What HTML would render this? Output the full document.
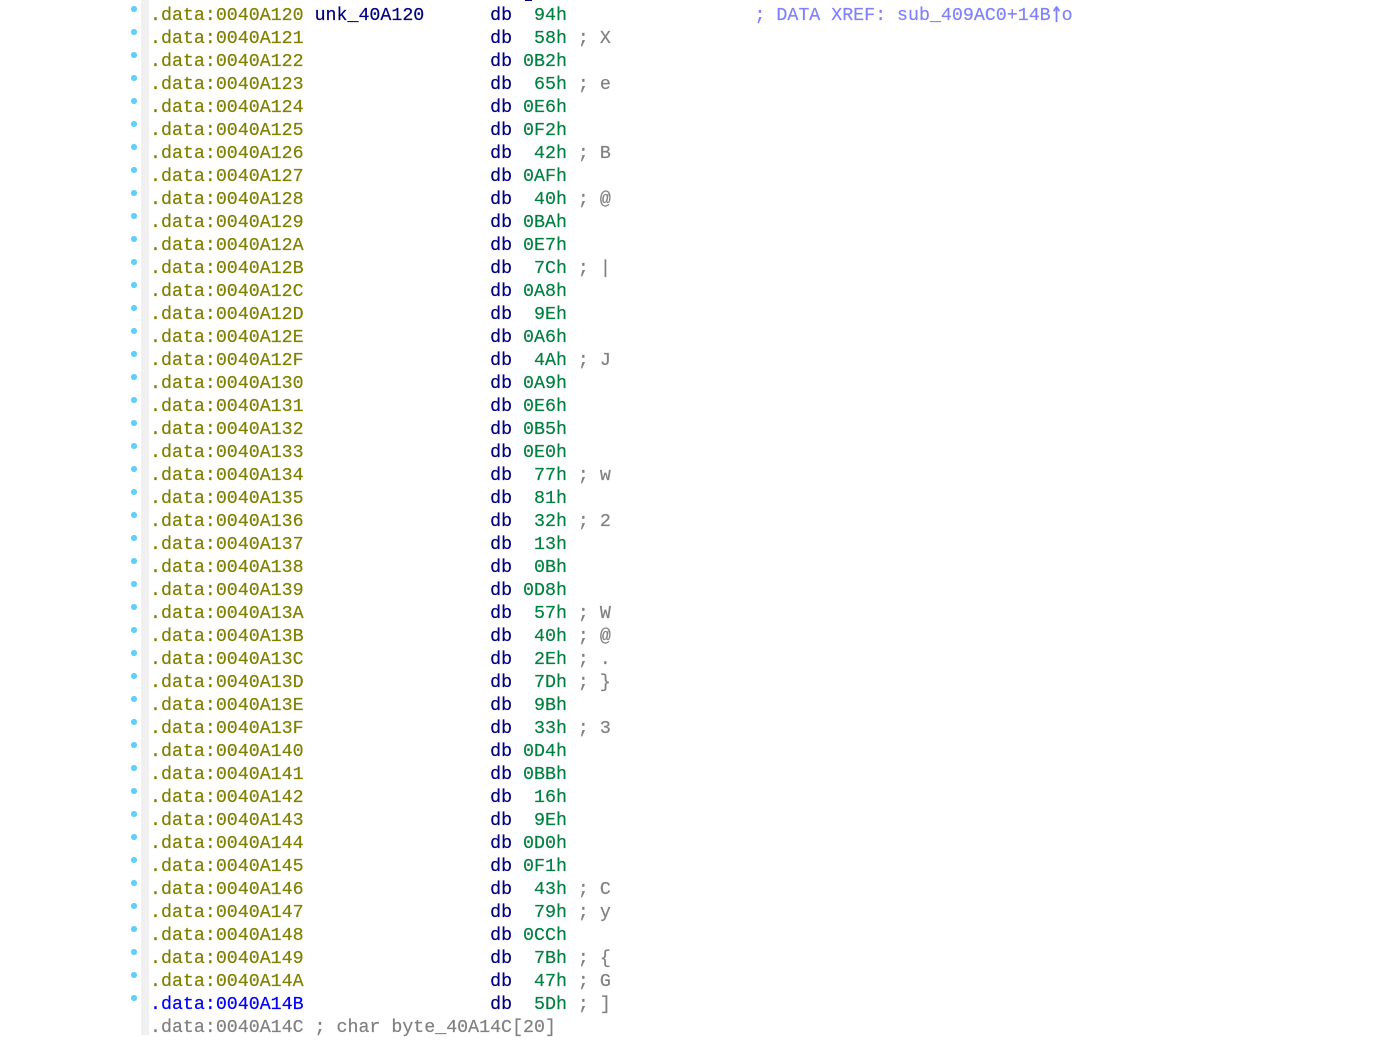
<!DOCTYPE html>
<html><head><meta charset="utf-8"><style>
html,body{margin:0;padding:0;background:#fff;width:1379px;height:1035px;overflow:hidden}
#bar{position:absolute;left:141px;top:0;width:8px;height:1035px;background:#f0f0f0}
#frag{position:absolute;left:525px;top:0;width:7px;height:1px;background:#000080}
#code{position:absolute;left:150px;top:5px;margin:0;font:18.3px/23px "Liberation Mono",monospace;color:#808000;white-space:pre;-webkit-text-stroke:.2px}
b{font-weight:normal;color:#000080}
i{font-style:normal;color:#008040}
u{text-decoration:none;color:#808080}
s{text-decoration:none;color:#8080ff;margin-left:1px}
em{font-style:normal;color:#0000ff}
tt{display:inline-block;width:10.98px;text-align:center;line-height:14px;font-family:"DejaVu Sans Mono",monospace;transform:translateY(-1px) scale(1.1,1.6)}
#dots{position:absolute;left:131px;top:6px;width:6px;height:1000px;background:radial-gradient(circle at 3px 3px,#5fcfff 2.8px,transparent 3.3px) 0 0/6px 23px repeat-y}
</style></head><body>
<div id="bar"></div><div id="dots"></div><div id="frag"></div>
<pre id="code">.data:0040A120 <b>unk_40A120</b>      <b>db</b>  <i>94h</i>                 <s>; DATA XREF: sub_409AC0+14B<tt>↑</tt>o</s>
.data:0040A121                 <b>db</b>  <i>58h</i> <u>; X</u>
.data:0040A122                 <b>db</b> <i>0B2h</i>
.data:0040A123                 <b>db</b>  <i>65h</i> <u>; e</u>
.data:0040A124                 <b>db</b> <i>0E6h</i>
.data:0040A125                 <b>db</b> <i>0F2h</i>
.data:0040A126                 <b>db</b>  <i>42h</i> <u>; B</u>
.data:0040A127                 <b>db</b> <i>0AFh</i>
.data:0040A128                 <b>db</b>  <i>40h</i> <u>; @</u>
.data:0040A129                 <b>db</b> <i>0BAh</i>
.data:0040A12A                 <b>db</b> <i>0E7h</i>
.data:0040A12B                 <b>db</b>  <i>7Ch</i> <u>; |</u>
.data:0040A12C                 <b>db</b> <i>0A8h</i>
.data:0040A12D                 <b>db</b>  <i>9Eh</i>
.data:0040A12E                 <b>db</b> <i>0A6h</i>
.data:0040A12F                 <b>db</b>  <i>4Ah</i> <u>; J</u>
.data:0040A130                 <b>db</b> <i>0A9h</i>
.data:0040A131                 <b>db</b> <i>0E6h</i>
.data:0040A132                 <b>db</b> <i>0B5h</i>
.data:0040A133                 <b>db</b> <i>0E0h</i>
.data:0040A134                 <b>db</b>  <i>77h</i> <u>; w</u>
.data:0040A135                 <b>db</b>  <i>81h</i>
.data:0040A136                 <b>db</b>  <i>32h</i> <u>; 2</u>
.data:0040A137                 <b>db</b>  <i>13h</i>
.data:0040A138                 <b>db</b>  <i>0Bh</i>
.data:0040A139                 <b>db</b> <i>0D8h</i>
.data:0040A13A                 <b>db</b>  <i>57h</i> <u>; W</u>
.data:0040A13B                 <b>db</b>  <i>40h</i> <u>; @</u>
.data:0040A13C                 <b>db</b>  <i>2Eh</i> <u>; .</u>
.data:0040A13D                 <b>db</b>  <i>7Dh</i> <u>; }</u>
.data:0040A13E                 <b>db</b>  <i>9Bh</i>
.data:0040A13F                 <b>db</b>  <i>33h</i> <u>; 3</u>
.data:0040A140                 <b>db</b> <i>0D4h</i>
.data:0040A141                 <b>db</b> <i>0BBh</i>
.data:0040A142                 <b>db</b>  <i>16h</i>
.data:0040A143                 <b>db</b>  <i>9Eh</i>
.data:0040A144                 <b>db</b> <i>0D0h</i>
.data:0040A145                 <b>db</b> <i>0F1h</i>
.data:0040A146                 <b>db</b>  <i>43h</i> <u>; C</u>
.data:0040A147                 <b>db</b>  <i>79h</i> <u>; y</u>
.data:0040A148                 <b>db</b> <i>0CCh</i>
.data:0040A149                 <b>db</b>  <i>7Bh</i> <u>; {</u>
.data:0040A14A                 <b>db</b>  <i>47h</i> <u>; G</u>
<em>.data:0040A14B</em>                 <b>db</b>  <i>5Dh</i> <u>; ]</u>
<u>.data:0040A14C ; char byte_40A14C[20]</u></pre>
</body></html>
